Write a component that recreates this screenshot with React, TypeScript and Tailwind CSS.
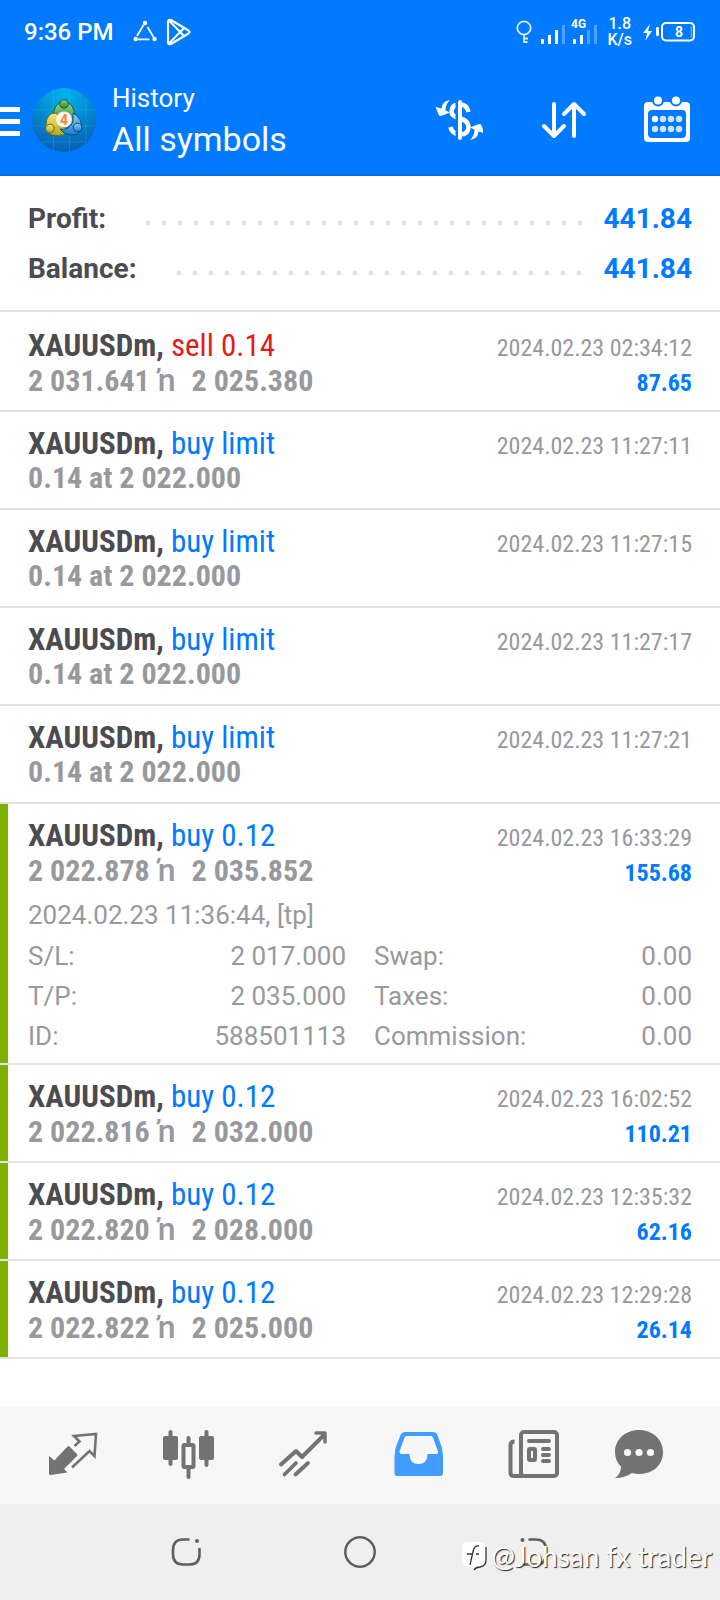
import type { ReactNode } from "react";

type Detail = { opened: string; left: [string, string][]; right: [string, string][] };
type Deal = {
  id: number;
  action: string;
  sell?: boolean;
  time: string;
  price: string;
  close?: string;
  profit?: string;
  marked?: boolean;
  detail?: Detail;
};

const deals: Deal[] = [
  { id: 1, action: "sell 0.14", sell: true, time: "2024.02.23 02:34:12", price: "2 031.641", close: "2 025.380", profit: "87.65" },
  { id: 2, action: "buy limit", time: "2024.02.23 11:27:11", price: "0.14 at 2 022.000" },
  { id: 3, action: "buy limit", time: "2024.02.23 11:27:15", price: "0.14 at 2 022.000" },
  { id: 4, action: "buy limit", time: "2024.02.23 11:27:17", price: "0.14 at 2 022.000" },
  { id: 5, action: "buy limit", time: "2024.02.23 11:27:21", price: "0.14 at 2 022.000" },
  {
    id: 6,
    action: "buy 0.12",
    time: "2024.02.23 16:33:29",
    price: "2 022.878",
    close: "2 035.852",
    profit: "155.68",
    marked: true,
    detail: {
      opened: "2024.02.23 11:36:44, [tp]",
      left: [["S/L:", "2 017.000"], ["T/P:", "2 035.000"], ["ID:", "588501113"]],
      right: [["Swap:", "0.00"], ["Taxes:", "0.00"], ["Commission:", "0.00"]],
    },
  },
  { id: 7, action: "buy 0.12", time: "2024.02.23 16:02:52", price: "2 022.816", close: "2 032.000", profit: "110.21", marked: true },
  { id: 8, action: "buy 0.12", time: "2024.02.23 12:35:32", price: "2 022.820", close: "2 028.000", profit: "62.16", marked: true },
  { id: 9, action: "buy 0.12", time: "2024.02.23 12:29:28", price: "2 022.822", close: "2 025.000", profit: "26.14", marked: true },
];

function StatusBar() {
  return (
    <div className="flex h-16 items-center justify-between pr-[25px] pl-6 text-white">
      <div className="flex items-center">
        <span className="text-2xl font-medium">9:36 PM</span>
        <svg className="ml-[18px]" width="26" height="26" viewBox="0 0 26 26" fill="none" stroke="currentColor" strokeWidth="1.8">
          <path d="M11.5 6 L5 17M15.500 8 L21.500 18M6 20.300 H17.500" />
          <g fill="currentColor" stroke="none">
            <circle cx="13" cy="4" r="2.200" />
            <circle cx="3.700" cy="20" r="2.200" />
            <circle cx="22.500" cy="20" r="2.200" />
          </g>
        </svg>
        <svg className="ml-2" width="26" height="28" viewBox="0 0 26 28" fill="none" stroke="currentColor" strokeWidth="2.100" strokeLinejoin="round">
          <path d="M2 3.500 Q2.500 1 5 2 L22.500 12.500 Q24.500 14 22.500 15.500 L5 26 Q2.500 27 2 24.500 Z" />
          <path d="M3 2.500 L18 18M3 25.500 L18 10" />
        </svg>
      </div>
      <div className="flex items-center">
        <svg width="16" height="24" viewBox="0 0 16 24" fill="none" stroke="currentColor" strokeWidth="1.800" opacity=".85">
          <circle cx="8" cy="8" r="6.700" />
          <path d="M8 14.500 V23M8 18.500 H12M8 22 H11.500" />
        </svg>
        <svg className="ml-[9px]" width="24" height="30" viewBox="0 0 24 30" fill="currentColor">
          <rect x="0" y="22" width="3" height="5" rx="1" />
          <rect x="7" y="18" width="3" height="9" />
          <rect x="14" y="13" width="3" height="14" />
          <rect x="21" y="8" width="3" height="19" opacity=".3" />
        </svg>
        <svg className="ml-[6px]" width="26" height="30" viewBox="0 0 26 30" fill="currentColor">
          <text x="0" y="11" className="text-[12px] font-bold">4G</text>
          <rect x="2" y="22" width="3" height="5" rx="1" />
          <rect x="9" y="18" width="3" height="9" />
          <rect x="16" y="13" width="3" height="14" opacity=".3" />
          <rect x="23" y="8" width="3" height="19" opacity=".3" />
        </svg>
        <div className="ml-[10px] text-center text-base leading-4 font-medium">
          <div>1.8</div>
          <div>K/s</div>
        </div>
        <svg className="ml-[11px]" width="52" height="20" viewBox="0 0 52 20" fill="none" stroke="currentColor">
          <path d="M7 2 L0 11 H4 L2.500 18.500 L9 9 H5 Z" fill="currentColor" stroke="none" />
          <rect x="13" y="5" width="3" height="9" rx="1" fill="currentColor" stroke="none" />
          <rect x="19" y="1" width="32" height="17.500" rx="4" strokeWidth="2" />
          <path d="M48.500 4 V16" strokeWidth="1.500" opacity=".4" />
          <text x="36" y="15" textAnchor="middle" fill="currentColor" stroke="none" className="text-[14px] font-bold">8</text>
        </svg>
      </div>
    </div>
  );
}

function AppLogo() {
  return (
    <svg width="64" height="64" viewBox="0 0 64 64">
      <defs>
        <radialGradient id="sky" cx=".5" cy=".1" r=".9">
          <stop offset="0" stopColor="#00b4f0" />
          <stop offset=".55" stopColor="#0684cf" />
          <stop offset="1" stopColor="#0562b4" />
        </radialGradient>
        <linearGradient id="green" x2="0" y2="1">
          <stop offset="0" stopColor="#8fd08a" />
          <stop offset="1" stopColor="#2c8733" />
        </linearGradient>
        <linearGradient id="gold" x2="0" y2="1">
          <stop offset="0" stopColor="#f3ea80" />
          <stop offset="1" stopColor="#b9a61c" />
        </linearGradient>
        <linearGradient id="azure" x2="0" y2="1">
          <stop offset="0" stopColor="#8fd2f7" />
          <stop offset="1" stopColor="#1b7cc8" />
        </linearGradient>
      </defs>
      <circle cx="32" cy="32" r="32" fill="url(#sky)" />
      <path d="M21.500 2 V62M37.500 1 V63M54 10 V54M2 22 H62M1 38 H63M10 54 H54" stroke="#5cc3f2" strokeWidth=".7" opacity=".3" />
      <g strokeWidth="1">
        <path d="M21 31 Q21 14 32 14 Q43 14 43 31 Q43 38 32 38 Q21 38 21 31Z" fill="url(#green)" stroke="#1b6127" />
        <path d="M25 25 Q14 24 14 38 Q14 48 26 47.500 Q36 47 37 41 L27 38 Z" fill="url(#gold)" stroke="#756a12" />
        <path d="M41 25 Q50 30 49.500 40 Q47 48 38 47 Q31 46 28 41 Q36 43 41 34Z" fill="url(#azure)" stroke="#0c4d88" />
        <circle cx="32" cy="16" r="4.300" fill="url(#green)" stroke="#1b6127" />
        <circle cx="18" cy="40.500" r="4.300" fill="url(#gold)" stroke="#756a12" />
        <circle cx="45.500" cy="39.500" r="4.300" fill="url(#azure)" stroke="#0c4d88" />
      </g>
      <circle cx="32" cy="31.500" r="8" fill="#f5f3ee" />
      <text x="32" y="36.500" textAnchor="middle" fill="#f28a2e" className="text-[14px] font-bold">4</text>
    </svg>
  );
}

function HeaderButton({ label, children }: { label: string; children: ReactNode }) {
  return (
    <button type="button" aria-label={label} className="block">
      <svg width="48" height="48" viewBox="0 0 48 48" fill="none" stroke="currentColor">
        {children}
      </svg>
    </button>
  );
}

function AppHeader() {
  return (
    <header className="border-b-2 border-[#006ce0] bg-[#007aff] text-white">
      <StatusBar />
      <div className="flex h-[110px] items-start justify-between pr-[29px]">
        <div className="flex items-start">
          <button type="button" aria-label="Menu" className="mt-[43px] flex w-5 flex-col gap-[7px]">
            <span className="h-[5px] w-full bg-white" />
            <span className="h-[5px] w-full bg-white" />
            <span className="h-[5px] w-full bg-white" />
          </button>
          <div className="mt-6 ml-3">
            <AppLogo />
          </div>
          <div className="mt-[17px] ml-4">
            <div className="text-[26px] leading-[34px]">History</div>
            <h1 className="text-[34px] leading-[48px]">All symbols</h1>
          </div>
        </div>
        <div className="mt-8 flex gap-14">
          <HeaderButton label="Profit display">
            <path d="M33.500 16 Q32 8.500 25 8.500 Q16.500 8.500 16.500 15.500 Q16.500 20.500 25 22.500 Q33.500 24.500 33.500 31 Q33.500 38.500 25 38.500 Q17 38 15.500 31" strokeWidth="4.500" />
            <path d="M22 4 V44" stroke="#007aff" strokeWidth="3" />
            <path d="M25 6 V42" strokeWidth="4" strokeLinecap="round" />
            <g fill="currentColor" stroke="none">
              <path d="M15 4 Q7 5 6.500 12.500 L1 11 Q0.500 11 1 12 L4 19.500 L6 20 L14 17 Q14.500 16 13 15.500 L10.500 14.500 Q10.500 8 15 4Z" />
              <path d="M15 4 Q7 5 6.500 12.500 L1 11 Q0.500 11 1 12 L4 19.500 L6 20 L14 17 Q14.500 16 13 15.500 L10.500 14.500 Q10.500 8 15 4Z" transform="rotate(180 25 24)" />
            </g>
          </HeaderButton>
          <HeaderButton label="Sort">
            <path d="M15 8 V40M5 30 L15 40 L25 30M35 40 V8M25 18 L35 8 L45 18" strokeWidth="4" strokeLinecap="round" strokeLinejoin="round" />
          </HeaderButton>
          <HeaderButton label="Choose period">
            <rect x="1" y="6" width="46" height="40" rx="4" fill="currentColor" stroke="none" />
            <rect x="5" y="14" width="38" height="28" rx="4" fill="#007aff" stroke="none" />
            <g fill="currentColor" stroke="#007aff" strokeWidth="2">
              <circle cx="15" cy="4.500" r="5" />
              <circle cx="33" cy="4.500" r="5" />
            </g>
            <g fill="currentColor" stroke="none">
              <circle cx="12" cy="23" r="3.200" />
              <g opacity=".8">
                <circle cx="20" cy="23" r="3.200" />
                <circle cx="28" cy="23" r="3.200" />
                <circle cx="36" cy="23" r="3.200" />
                <circle cx="12" cy="33" r="3.200" />
                <circle cx="20" cy="33" r="3.200" />
                <circle cx="28" cy="33" r="3.200" />
                <circle cx="36" cy="33" r="3.200" />
              </g>
            </g>
          </HeaderButton>
        </div>
      </div>
    </header>
  );
}

function SummaryRow({ label, value }: { label: string; value: string }) {
  return (
    <div className="flex items-center text-[28px] leading-[50px]">
      <dt className="font-bold text-[#4b4b50]">{label}</dt>
      <div className="mt-2 ml-[34px] h-4 flex-1 bg-[radial-gradient(circle,#e3e3e3_2px,transparent_3px)] bg-[length:16px_16px] bg-repeat-x" />
      <dd className="ml-4 font-bold text-[#007aff]">{value}</dd>
    </div>
  );
}

function DetailColumn({ rows }: { rows: [string, string][] }) {
  return (
    <dl>
      {rows.map(([name, value]) => (
        <div key={name} className="flex justify-between leading-10">
          <dt>{name}</dt>
          <dd>{value}</dd>
        </div>
      ))}
    </dl>
  );
}

function DealRow({ deal }: { deal: Deal }) {
  return (
    <li className="flex border-b-2 border-[#e3e3e3]">
      <div className={deal.marked ? "w-2 bg-[#7fb000]" : "w-2"} />
      <div className="flex-1 pt-[15px] pr-7 pl-5">
        <div className="pb-[13px] font-['Roboto_Condensed',Roboto,sans-serif]">
          <div className="flex h-[34px] items-baseline justify-between leading-[34px]">
            <div className="text-[31px]">
              <span className="font-bold text-[#4b4b50]">XAUUSDm,</span>{" "}
              <span className={deal.sell ? "text-[#e31b1b]" : "text-[#007aff]"}>{deal.action}</span>
            </div>
            <time className="text-[24px] text-[#98999d]">{deal.time}</time>
          </div>
          <div className="flex h-[34px] items-baseline justify-between leading-[34px]">
            <div className="text-[30px] font-bold text-[#98999d]">
              {deal.price}
              {deal.close && (
                <>
                  <span className="mr-4 ml-2 font-[Roboto] text-[32px] leading-[34px] font-medium">ŉ</span>
                  {deal.close}
                </>
              )}
            </div>
            {deal.profit && <div className="text-[24px] font-bold text-[#007aff]">{deal.profit}</div>}
          </div>
        </div>
        {deal.detail && (
          <div className="-mt-[5px] pb-[7px] text-[26px] text-[#98999d]">
            <div className="leading-[41px]">{deal.detail.opened}</div>
            <div className="grid grid-cols-2 gap-x-7">
              <DetailColumn rows={deal.detail.left} />
              <DetailColumn rows={deal.detail.right} />
            </div>
          </div>
        )}
      </div>
    </li>
  );
}

function Tab({ label, children }: { label: string; children: ReactNode }) {
  return (
    <button type="button" aria-label={label} className="flex justify-center">
      <svg width="64" height="64" viewBox="0 0 64 64" fill="none" stroke="currentColor">
        {children}
      </svg>
    </button>
  );
}

function TabBar() {
  return (
    <nav className="grid h-[98px] grid-cols-6 items-center bg-[#f7f7f7] px-4 text-[#737373]">
      <Tab label="Quotes">
        <path d="M8 33 L13.500 37.500 L26.500 23.500 Q27.500 22.500 28.500 23.500 L36 31 Q37 32 36 33 L23 46 L26.500 49.500 L9.500 52 Q8 52 8 50.500Z" fill="currentColor" stroke="none" />
        <path d="M33.500 23 L38.500 18.500 L33 13 L55 11 L53.500 33 L48.500 28 L31 44.500" strokeWidth="2.600" />
      </Tab>
      <Tab label="Charts">
        <g fill="currentColor" stroke="none">
          <rect x="7" y="13" width="15" height="24" rx="2" />
          <rect x="12.500" y="7" width="4" height="36" rx="2" />
          <rect x="43" y="13" width="15" height="24" rx="2" />
          <rect x="48.500" y="7" width="4" height="37" rx="2" />
          <rect x="30.500" y="13" width="4" height="8" rx="2" />
          <rect x="30.500" y="43" width="4" height="13" rx="2" />
        </g>
        <rect x="27.500" y="22" width="10" height="22" rx="1" strokeWidth="4" />
      </Tab>
      <Tab label="Trade">
        <path d="M10 41.500 L25 28 L31 34 L53 12" strokeWidth="4" strokeLinecap="round" strokeLinejoin="round" />
        <path d="M45 10 H54 V19" strokeWidth="3.500" strokeLinejoin="round" strokeLinecap="round" />
        <path d="M13.500 51.500 L25 40M24.500 51.500 L37 40" strokeWidth="3.800" strokeLinecap="round" />
      </Tab>
      <Tab label="History">
        <path transform="translate(1.500 0)" fillRule="evenodd" d="M19 9 H46 Q49.500 9 51 12 L55.500 25 L56.500 33 V50 Q56.500 53 53.500 53 H11 Q8 53 8 50 V33 L9 25 L14 12 Q15.500 9 19 9Z M20 13 Q18.500 13 18 14.500 L13 28.500 Q13 31 15 31 H23 V32 Q23.500 41 32 41 Q40.500 41 41 32 V31 H49.500 Q52 31 51.500 28.500 L46.500 14.500 Q46 13 44.500 13Z" fill="#419cff" stroke="none" />
      </Tab>
      <Tab label="News">
        <g transform="translate(1 0)">
          <rect x="20" y="9" width="36" height="44" rx="3" strokeWidth="4" />
          <path d="M13.500 18.500 Q9.500 18.500 9.500 22 V49.500 Q9.500 53 13 53 H22" strokeWidth="4" />
          <path d="M28 18 H48M42 26 H48M42 32 H48M42 38 H48" strokeWidth="4" strokeLinecap="round" />
          <rect x="28" y="26" width="6" height="11" rx="1" strokeWidth="4" />
        </g>
      </Tab>
      <Tab label="Messages">
        <path d="M24 7 C38 7 48 17 48 29 C48 42 38 51 24 51 Q20 51 17 50 Q10 55 0 55 Q6 51 6 43.500 Q0 38 0 29 C0 17 10 7 24 7Z" fill="currentColor" stroke="none" />
        <g fill="#f7f7f7" stroke="none">
          <circle cx="12.500" cy="29.500" r="3.600" />
          <circle cx="24" cy="29.500" r="3.600" />
          <circle cx="35.500" cy="29.500" r="3.600" />
        </g>
      </Tab>
    </nav>
  );
}

function SystemBar() {
  return (
    <div className="relative flex h-24 items-center justify-center gap-[142px] bg-[#efefef] text-[#5f5f5f]">
      <button type="button" aria-label="Recent apps">
        <svg width="32" height="32" viewBox="0 0 32 32" fill="none" stroke="currentColor" strokeWidth="2.600" strokeLinecap="round">
          <path d="M18.500 3.500 H13 Q3 3.500 3 14 V18 Q3 28.500 13 28.500 H20 Q29.500 28.500 29.500 18 V13" />
          <circle cx="27" cy="5" r="2" fill="currentColor" stroke="none" />
        </svg>
      </button>
      <button type="button" aria-label="Home">
        <svg width="32" height="32" viewBox="0 0 32 32" fill="none" stroke="currentColor" strokeWidth="2.500">
          <circle cx="16" cy="16" r="14.700" />
        </svg>
      </button>
      <button type="button" aria-label="Back">
        <svg width="32" height="32" viewBox="0 0 32 32" fill="none" stroke="currentColor" strokeWidth="2.600" strokeLinecap="round">
          <path d="M11.500 3.500 H18 Q28 3.500 28 14 V18 Q28 28.500 18 28.500 H4" />
          <circle cx="4.500" cy="4" r="2" fill="currentColor" stroke="none" />
        </svg>
      </button>
      <div className="absolute right-2 bottom-7 flex items-center gap-1 text-white">
        <svg width="26" height="30" viewBox="0 0 26 30" fill="none">
          <path d="M6 1 H19 Q25 1 25 7 V19 Q25 25 19 25 Q14 25 13 29 Q12 25 6 25 Q1 25 1 19 V7 Q1 1 6 1Z" fill="#fff" />
          <path d="M25 6 V19 Q25 25 19 26 Q15 26 13 29M18 5 Q13 4 12 11 L9 24M6 13 H12M15 13 H18" stroke="#333" strokeWidth="1.300" />
        </svg>
        <span className="font-[Lato] text-[28px] leading-8 [text-shadow:1px_1px_1px_#222]">@Johsan fx trader</span>
      </div>
    </div>
  );
}

export default function App() {
  return (
    <div className="flex min-h-screen flex-col bg-white font-[Roboto,sans-serif]">
      <AppHeader />
      <main className="flex-1">
        <dl className="border-b-2 border-[#e3e3e3] px-7 pt-[18px] pb-4">
          <SummaryRow label="Profit:" value="441.84" />
          <SummaryRow label="Balance:" value="441.84" />
        </dl>
        <ul className="pt-0.5">
          {deals.map((deal) => (
            <DealRow key={deal.id} deal={deal} />
          ))}
        </ul>
      </main>
      <TabBar />
      <SystemBar />
    </div>
  );
}
